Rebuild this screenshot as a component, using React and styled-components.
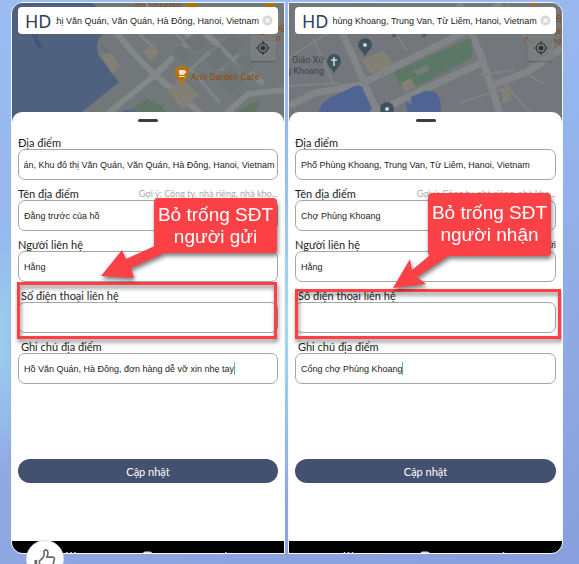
import React, { useEffect, useId, useRef } from "react";
import styled, { createGlobalStyle } from "styled-components";

const GlobalStyle = createGlobalStyle`
  * { box-sizing: border-box; }
  body { margin: 0; overflow: hidden; font-family: Lato, "Noto Sans", sans-serif; color: #1c1c1c; }
`;

const Page = styled.main`
  position: relative;
  min-height: 100vh;
  padding: 2px 16px 10px 11px;
  display: grid;
  grid-template-columns: 274fr 275fr;
  gap: 3px;
  overflow: hidden;
  background:
    radial-gradient(ellipse 30px 130px at 0 60%, #9bd0ec 0%, transparent 100%),
    radial-gradient(ellipse 40px 190px at 50% 56%, #a3dcee 0%, transparent 100%),
    linear-gradient(165deg, #9cbdf2 0%, #94b4ec 40%, #8fa9e2 70%, #879fdc 100%);
`;

const Phone = styled.section`
  position: relative;
  display: flex;
  flex-direction: column;
  min-width: 0;
  border: 1px solid #f4f7fc;
  border-radius: ${(p) => (p.$side === "left" ? "12px 0 0 12px" : "0 12px 12px 0")};
  overflow: hidden;
  background: #ffffff;
`;

const MapArea = styled.div`
  position: relative;
  height: 120px;
  padding: 4px 6px;
  background: #72777a;
`;

const MapDrawing = styled.svg`
  position: absolute;
  inset: 0;
  width: 100%;
  height: 100%;
`;

const SearchBar = styled.div`
  position: relative;
  display: flex;
  align-items: center;
  height: 27px;
  padding: 0 3px 0 7px;
  border-radius: 4px;
  background: #ffffff;
`;

const Monogram = styled.span`
  flex: none;
  width: 31px;
  font: 18px/26px "Noto Sans", sans-serif;
  color: #2c4059;
`;

const SearchInput = styled.input`
  flex: 1;
  min-width: 0;
  padding: 0;
  border: 0;
  outline: 0;
  background: none;
  color: #222222;
  font: 9px/16px "Liberation Sans", sans-serif;
`;

const IconButton = styled.button`
  display: flex;
  align-items: center;
  justify-content: center;
  flex: none;
  padding: 0;
  border: 0;
  background: none;
`;

const ClearButton = styled(IconButton)`
  width: 16px;
  height: 16px;
`;

const LocateButton = styled(IconButton)`
  position: absolute;
  top: 32px;
  right: 8px;
  width: 26px;
  height: 26px;
  border-radius: 2px;
  background: rgba(124, 128, 129, 0.8);
  box-shadow: 0 1px 1px rgba(0, 0, 0, 0.2);
`;

const Sheet = styled.form`
  position: relative;
  flex: 1;
  display: flex;
  flex-direction: column;
  margin-top: -11px;
  padding: 7px 6px 0;
  border-radius: 10px 10px 0 0;
  background: #ffffff;
`;

const Handle = styled.div`
  align-self: center;
  width: 20px;
  height: 3px;
  margin-bottom: 14px;
  border-radius: 2px;
  background: #3c3c3c;
`;

const Field = styled.div`
  display: flex;
  flex-direction: column;
  height: 51px;
`;

const FieldHead = styled.div`
  display: flex;
  justify-content: space-between;
  height: 13px;
  padding-left: ${(p) => (p.$inset ? "3px" : "0")};
  line-height: 13px;
`;

const FieldLabel = styled.label`
  font-size: 11px;
  white-space: nowrap;
`;

const Hint = styled.span`
  font-size: 9px;
  color: ${(p) => (p.$dark ? "#1c1c1c" : "#a9a9a9")};
  white-space: nowrap;
`;

const InputFrame = styled.div`
  display: flex;
  align-items: center;
  height: 31px;
  padding: 0 2px 0 5px;
  border: 1px solid #a6a6a6;
  border-radius: 7px;
`;

const TextInput = styled.input`
  flex: ${(p) => (p.$fit ? "none" : "1")};
  field-sizing: ${(p) => (p.$fit ? "content" : "fixed")};
  min-width: 0;
  padding: 0;
  border: 0;
  outline: 0;
  background: none;
  color: #1c1c1c;
  font: 9px/14px "Liberation Sans", sans-serif;
`;

const Caret = styled.span`
  width: 1px;
  height: 13px;
  background: #4db6a4;
`;

const Submit = styled.button`
  height: 24px;
  margin-top: 68px;
  border: 0;
  border-radius: 12px;
  background: #44506f;
  color: #ffffff;
  font: 11px/24px Lato, "Noto Sans", sans-serif;
`;

const NavBar = styled.div`
  display: flex;
  justify-content: space-around;
  height: 12px;
  background: #000000;
`;

const NavDrawing = styled.svg`
  width: 100%;
  height: 12px;
`;

const Highlight = styled.div`
  position: absolute;
  top: ${(p) => (p.$side === "left" ? "170px" : "177px")};
  bottom: 202px;
  left: ${(p) => (p.$side === "left" ? "5px" : "6px")};
  right: ${(p) => (p.$side === "left" ? "7px" : "1px")};
  border: 3px solid #fb4145;
  filter: drop-shadow(1px 3px 2px rgba(0, 0, 0, 0.5));
  pointer-events: none;
`;

const Callout = styled.aside`
  position: absolute;
  top: ${(p) => (p.$side === "left" ? "86px" : "81px")};
  right: ${(p) => (p.$side === "left" ? "7px" : "11px")};
  width: 123px;
  height: ${(p) => (p.$side === "left" ? "55px" : "63px")};
  padding-top: ${(p) => (p.$side === "left" ? "6px" : "9px")};
  border-radius: 4px;
  background: #fb4145;
  color: #ffffff;
  text-align: center;
  font: 19px/22px "Liberation Sans", sans-serif;
  filter: drop-shadow(1px 3px 2px rgba(0, 0, 0, 0.5));
`;

const Arrow = styled.svg`
  position: absolute;
  left: -55px;
  top: 0;
  width: 90px;
  height: 110px;
  overflow: visible;
`;

const CalloutText = styled.p`
  position: relative;
  margin: 0;
  white-space: pre-line;
`;

const LikeButton = styled(IconButton)`
  position: absolute;
  left: 26px;
  bottom: -14px;
  width: 38px;
  height: 38px;
  border: 1px solid #d5dcec;
  border-radius: 50%;
  background: #ffffff;
`;

function LakeMap() {
  return (
    <MapDrawing viewBox="0 0 272 120" preserveAspectRatio="none" aria-hidden="true">
      <path d="M0 0H78Q84 0 88 10L101 20L87 35Q83 44 87 53L107 79L70 109L58 120H0Z" fill="#50617f" />
      <g stroke="#838788" strokeWidth="6" fill="none">
        <path d="M96 16Q108 38 143 72L204 12M143 72L84 120M143 72L200 120M193 30L250 80M215 110L236 91L272 87M150 8L190 45" />
      </g>
      <g stroke="#7f8485" strokeWidth="3" fill="none">
        <path d="M110 14L145 48M133 0L180 46M165 80L196 50L225 85M178 65L208 100M200 50L240 10M214 40L252 82" />
      </g>
      <path d="M89 52L98 49L108 63L100 71ZM156 88L171 76L187 92L170 107ZM130 48L142 40L147 51L138 58ZM252 14L268 10V26L258 34Z" fill="#827f74" />
      <g fill="#6f7477" stroke="#7a7f81">
        <path d="M192 57L207 43L218 58L203 70ZM208 40L221 28L234 43L221 54ZM202 73L220 61L235 79L218 94ZM223 57L237 47L248 60L235 73ZM172 38L186 28L199 40L184 51ZM158 50L168 40L180 52L169 62Z" />
      </g>
      <path d="M120 106L135 96L150 103L162 120H116ZM223 110L240 100L248 98L240 120H225Z" fill="#5f7665" />
      <ellipse cx="117" cy="112" rx="10" ry="5" fill="#50659a" />
      <path d="M89 43L97 51" stroke="#5b5e60" />
      <g fontFamily="Roboto, sans-serif" fontSize="9" fill="#8f4a0c">
        <text x="123" y="5">Bò Tơ Quán</text>
        <text x="179" y="77">An's Garden Cafe</text>
        <text x="263" y="27">ng</text>
        <text x="248" y="38">Quán</text>
      </g>
      <rect x="173" y="0" width="12" height="4" rx="2" fill="#b0700f" />
      <path d="M252 0H265L258 7Z" fill="#b0700f" />
      <path d="M170 82C168 76 163 75 163 70A7 7 0 0 1 177 70C177 75 172 76 170 82Z" fill="#bb7308" />
      <path d="M167 67H173V70Q173 72 170 72Q167 72 167 70ZM173 68H174V70H173ZM167 73H173V74H167Z" fill="#e9e5db" />
      <text x="20" y="31" fill="#263f78" fontFamily="Roboto, sans-serif" fontSize="7" fontStyle="italic" transform="rotate(67 20 31)">Quán</text>
    </MapDrawing>
  );
}

function StreetMap() {
  return (
    <MapDrawing viewBox="0 0 273 120" preserveAspectRatio="none" aria-hidden="true">
      <rect width="273" height="120" fill="#73777b" />
      <g stroke="#818587" strokeWidth="7" fill="none">
        <path d="M0 103L26 90L70 82L180 27L212 0M75 80L94 120M170 0L194 58L214 120M74 115L194 59M205 82L240 68L273 45M42 5L76 81" />
      </g>
      <g stroke="#7e8385" strokeWidth="2" fill="none">
        <path d="M0 55L48 24L108 31M0 83L50 80M24 35L44 80M108 32L118 48M218 0L246 55M190 72L226 67M215 80L250 120M170 100L220 84M232 67L255 81" />
      </g>
      <path d="M105 69L182 35L183 54L123 86L111 82Z" fill="#5b7765" />
      <path d="M124 68L138 61L141 67L129 73Z" fill="#727c78" />
      <path d="M72 57L94 47L105 61L82 71ZM112 80L122 75L127 84L115 89ZM213 86L222 84V97L213 101Z" fill="#827f74" />
      <path d="M30 108Q31 102 39 96L66 83Q74 81 75 89L82 104Q82 111 74 120H26ZM116 98L123 102L122 94L136 88Q149 87 151 97L153 120H122Z" fill="#4f6493" />
      <g fill="#3e535f">
        <path d="M76 54C74 47 69 47 69 42A7 7 0 0 1 83 42C83 47 78 47 76 54ZM45 71C43 64 38 64 38 58A7 7 0 0 1 52 58C52 64 47 64 45 71ZM98 117C96 112 91 111 91 106A7 7 0 0 1 105 106C105 111 100 112 98 117Z" />
      </g>
      <circle cx="76" cy="42" r="2" fill="#cbd0d1" />
      <circle cx="98" cy="106" r="2" fill="#cbd0d1" />
      <path d="M45 54V63M42 57H48" stroke="#d6d8d8" strokeWidth="1.5" />
      <g fontFamily="Roboto, sans-serif" fontSize="9" fill="#39444d">
        <text x="3" y="60">Giáo Xứ</text>
        <text x="-3" y="71">g Khoang</text>
        <text x="102" y="32">g</text>
        <text x="132" y="32">g</text>
      </g>
      <g fontFamily="Roboto, sans-serif" fontSize="9" fill="#8f4a0c">
        <text x="267" y="19">B</text>
        <text x="264" y="31">ôn</text>
        <text x="234" y="40" fontSize="8">Thịt nướng</text>
      </g>
      <path d="M241 0H248L244 4Z" fill="#b0700f" />
    </MapDrawing>
  );
}

function ScrolledInput({ as: Component, text, fit, ...rest }) {
  const ref = useRef(null);
  useEffect(() => {
    ref.current.scrollLeft = ref.current.scrollWidth;
  }, []);
  return <Component ref={ref} type="text" defaultValue={text} $fit={fit} {...rest} />;
}

function FormField({ label, value = "", hint, darkHint, inset, caret }) {
  const id = useId();
  return (
    <Field>
      <FieldHead $inset={inset}>
        <FieldLabel htmlFor={id}>{label}</FieldLabel>
        {hint && <Hint $dark={darkHint}>{hint}</Hint>}
      </FieldHead>
      <InputFrame>
        <ScrolledInput as={TextInput} id={id} text={value} fit={caret} />
        {caret && <Caret />}
      </InputFrame>
    </Field>
  );
}

function NavIcons() {
  return (
    <NavDrawing viewBox="0 0 272 12" aria-hidden="true">
      <path d="M55 11V12M59 11V12M63 11V12M214 11V12" stroke="#dddddd" strokeWidth="1.5" />
      <rect x="131" y="10.5" width="9" height="5" rx="2" fill="#dddddd" />
    </NavDrawing>
  );
}

function PhoneScreen({ side, map, search, place, name, contactHint, note, callout, arrow }) {
  return (
    <Phone $side={side}>
      <MapArea>
        {map}
        <SearchBar>
          <Monogram>HD</Monogram>
          <ScrolledInput as={SearchInput} text={search} aria-label="Địa chỉ" />
          <ClearButton type="button" aria-label="Xóa">
            <svg width="11" height="11" viewBox="0 0 11 11">
              <circle cx="5.5" cy="5.5" r="5" fill="#d8d8d8" />
              <path d="M3.5 3.5L7.5 7.5M7.5 3.5L3.5 7.5" stroke="#ffffff" strokeWidth="1.3" />
            </svg>
          </ClearButton>
        </SearchBar>
        <LocateButton type="button" aria-label="Vị trí của tôi">
          <svg width="14" height="14" viewBox="0 0 14 14" fill="none" stroke="#303435" strokeWidth="1.2">
            <circle cx="7" cy="7" r="4.7" />
            <circle cx="7" cy="7" r="2.5" fill="#303435" stroke="none" />
            <path d="M7 0V2.5M7 11.5V14M0 7H2.5M11.5 7H14" />
          </svg>
        </LocateButton>
      </MapArea>
      <Sheet>
        <Handle />
        <FormField label="Địa điểm" value={place} />
        <FormField label="Tên địa điểm" value={name} hint="Gợi ý: Công ty, nhà riêng, nhà kho..." />
        <FormField label="Người liên hệ" value="Hằng" hint={contactHint} darkHint />
        <FormField label="Số điện thoại liên hệ" inset />
        <FormField label="Ghi chú địa điểm" value={note} inset caret />
        <Submit type="button">Cập nhật</Submit>
        <Highlight $side={side} />
        <Callout $side={side}>
          <Arrow viewBox="0 0 90 110" aria-hidden="true">
            <path d={arrow} fill="#fb4145" />
          </Arrow>
          <CalloutText>{callout}</CalloutText>
        </Callout>
      </Sheet>
      <NavBar><NavIcons /></NavBar>
    </Phone>
  );
}

export default function App() {
  return (
    <Page>
      <GlobalStyle />
      <PhoneScreen
        side="left"
        map={<LakeMap />}
        search="Khu đô thị Văn Quán, Văn Quán, Hà Đông, Hanoi, Vietnam"
        place="Hồ Văn Quán, Khu đô thị Văn Quán, Văn Quán, Hà Đông, Hanoi, Vietnam"
        name="Đằng trước của hồ"
        note="Hồ Văn Quán, Hà Đông, đơn hàng dễ vỡ xin nhẹ tay"
        callout={"Bỏ trống SĐT\nngười gửi"}
        arrow="M2 78L23 52L27 61L60 46L68 54L32 70L35 80Z"
      />
      <PhoneScreen
        side="right"
        map={<StreetMap />}
        search="Phố Phùng Khoang, Trung Van, Từ Liêm, Hanoi, Vietnam"
        place="Phố Phùng Khoang, Trung Van, Từ Liêm, Hanoi, Vietnam"
        name="Chợ Phùng Khoang"
        contactHint="gửi"
        note="Cổng chợ Phùng Khoang"
        callout={"Bỏ trống SĐT\nngười nhận"}
        arrow="M20 95L37 66L39 77L62 58L80 60L44 84L53 91Z"
      />
      <LikeButton type="button" aria-label="Thích">
        <svg width="22" height="22" viewBox="0 0 24 24" fill="none" stroke="#66696d" strokeWidth="1.8" strokeLinejoin="round">
          <path d="M2 13V23" strokeWidth="3" />
          <path d="M6 14Q10 12 11 7V4Q11 2 13 2Q16 3 15 7L14 10H20Q23 10 22 13L20 21Q19 23 17 23H6Z" />
        </svg>
      </LikeButton>
    </Page>
  );
}
